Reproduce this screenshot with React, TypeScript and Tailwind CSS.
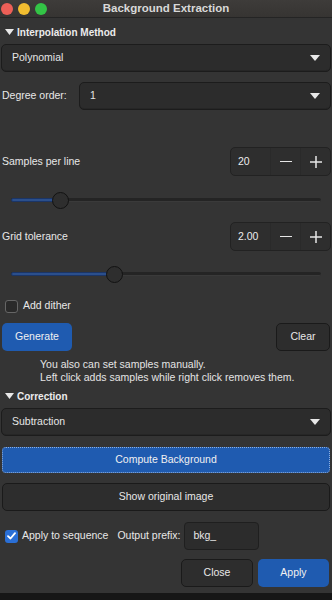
const FONT = "font-['Liberation_Sans',Arial,sans-serif]";

function Caret() {
  return (
    <svg width="10" height="6" viewBox="0 0 10 6" className="shrink-0">
      <path d="M0 0 L10 0 L5 6 Z" fill="#e8e8e8" />
    </svg>
  );
}

function SectionHeader({ label }: { label: string }) {
  return (
    <div className="flex items-center gap-[3px] h-[20px] pl-[4px] text-[10px] font-bold text-[#ececec]">
      <svg width="9" height="6" viewBox="0 0 9 6">
        <path d="M0 0 L9 0 L4.5 6 Z" fill="#e8e8e8" />
      </svg>
      <span>{label}</span>
    </div>
  );
}

function Dropdown({ value, className = "" }: { value: string; className?: string }) {
  return (
    <div
      className={`flex items-center justify-between h-[28px] pl-[10px] pr-[10px] rounded-[5px] bg-[#2c2c2c] border border-[#1c1c1c] shadow-[inset_0_-1px_0_#262626] text-[#e6e6e6] ${className}`}
    >
      <span>{value}</span>
      <Caret />
    </div>
  );
}

function SpinBox({ value }: { value: string }) {
  return (
    <div className="flex items-stretch h-[29px] w-[101px] rounded-[5px] bg-[#2e2e2e] border border-[#222] text-[#ececec]">
      <div className="flex items-center w-[40px] pl-[7px] border-r border-[#2a2a2a]">{value}</div>
      <div className="flex items-center justify-center w-[30px] border-r border-[#2a2a2a]">
        <span className="block w-[12px] h-[1.5px] bg-[#e6e6e6]" />
      </div>
      <div className="flex items-center justify-center flex-1">
        <svg width="12" height="12" viewBox="0 0 12 12">
          <path d="M6 0 V12 M0 6 H12" stroke="#e6e6e6" strokeWidth="1.5" />
        </svg>
      </div>
    </div>
  );
}

function Slider({ pos }: { pos: number }) {
  return (
    <div className="relative h-[16px] mx-[10px]">
      <div className="absolute left-0 right-0 top-[6px] h-[4px] rounded-full bg-[#242424] border-b border-[#3a3a3a]" />
      <div
        className="absolute left-0 top-[6px] h-[4px] rounded-full bg-[#2b4f8c] border border-[#1b3566]"
        style={{ width: pos }}
      />
      <div
        className="absolute top-0 w-[17px] h-[17px] rounded-full bg-[#2e2e2e] border border-[#121212]"
        style={{ left: pos - 8 }}
      />
    </div>
  );
}

function Checkbox({ checked }: { checked?: boolean }) {
  if (checked) {
    return (
      <div className="flex items-center justify-center w-[13px] h-[13px] rounded-[3px] bg-[#2a6fd6]">
        <svg width="9" height="8" viewBox="0 0 9 8">
          <path d="M1 4.2 L3.5 6.5 L8 1.2" stroke="#fff" strokeWidth="1.8" fill="none" strokeLinecap="round" strokeLinejoin="round" />
        </svg>
      </div>
    );
  }
  return <div className="w-[13px] h-[13px] rounded-[3px] bg-[#2a2a2a] border border-[#666]" />;
}

export default function App() {
  return (
    <div className={`w-[332px] h-[600px] flex flex-col bg-[#151515] ${FONT}`}>
      <div className="relative h-[18px] shrink-0 flex items-center justify-center bg-gradient-to-b from-[#3e3c3a] to-[#363432] border-b border-[#242424]">
        <div className="absolute left-[1px] top-[3px] flex gap-[5px]">
          <span className="w-[12px] h-[12px] rounded-full bg-[#ed5f57]" />
          <span className="w-[12px] h-[12px] rounded-full bg-[#f1bd30]" />
          <span className="w-[12px] h-[12px] rounded-full bg-[#33c446]" />
        </div>
        <span className="text-[11.5px] font-bold text-[#d8d8d8]">Background Extraction</span>
      </div>

      <div className="flex-1 flex flex-col bg-[#343434] px-[1px] pt-[4px] text-[10.5px] text-[#e8e8e8]">
        <SectionHeader label="Interpolation Method" />
        <Dropdown value="Polynomial" className="mt-[2px]" />

        <div className="flex items-center mt-[10px] pl-[1px]">
          <span className="w-[77px]">Degree order:</span>
          <Dropdown value="1" className="flex-1" />
        </div>

        <div className="flex items-center justify-between mt-[37px] pl-[1px]">
          <span>Samples per line</span>
          <SpinBox value="20" />
        </div>
        <div className="mt-[16px]">
          <Slider pos={49} />
        </div>

        <div className="flex items-center justify-between mt-[14px] pl-[1px]">
          <span>Grid tolerance</span>
          <SpinBox value="2.00" />
        </div>
        <div className="mt-[15px]">
          <Slider pos={103} />
        </div>

        <div className="flex items-center gap-[5px] mt-[17px] pl-[4px] h-[14px]">
          <Checkbox />
          <span>Add dither</span>
        </div>

        <div className="flex items-center justify-between mt-[10px] px-[1px]">
          <button className="h-[28px] w-[70px] rounded-[5px] bg-[#1f5bb0] text-[#f0f0f0]">Generate</button>
          <button className="h-[28px] w-[54px] rounded-[5px] bg-[#2d2d2d] border border-[#1a1a1a] text-[#e8e8e8]">Clear</button>
        </div>

        <div className="mt-[7px] pl-[39px] leading-[13px] text-[#e4e4e4]">
          <p>You also can set samples manually.</p>
          <p>Left click adds samples while right click removes them.</p>
        </div>

        <div className="mt-[2px]">
          <SectionHeader label="Correction" />
        </div>
        <Dropdown value="Subtraction" className="mt-[2px]" />

        <button className="mt-[11px] mx-[1px] h-[26px] rounded-[4px] bg-[#1f5bb0] border border-dotted border-[#8fb0e0] text-[#f0f0f0]">
          Compute Background
        </button>
        <button className="mt-[10px] mx-[1px] h-[28px] rounded-[5px] bg-[#2d2d2d] border border-[#1a1a1a] text-[#e8e8e8]">
          Show original image
        </button>

        <div className="flex items-center mt-[11px] pl-[4px]">
          <Checkbox checked />
          <span className="ml-[4px]">Apply to sequence</span>
          <span className="ml-[9px]">Output prefix:</span>
          <div className="ml-[4px] flex items-center w-[75px] h-[28px] pl-[8px] rounded-[4px] bg-[#2c2c2c] border border-[#1f1f1f]">bkg_</div>
        </div>

        <div className="flex justify-end gap-[5px] mt-[9px] pr-[2px]">
          <button className="h-[28px] w-[72px] rounded-[5px] bg-[#2d2d2d] border border-[#1a1a1a] text-[#e8e8e8]">Close</button>
          <button className="h-[28px] w-[71px] rounded-[5px] bg-[#1f5bb0] text-[#f0f0f0]">Apply</button>
        </div>
      </div>
      <div className="h-[7px] shrink-0 bg-[#161616]" />
    </div>
  );
}
